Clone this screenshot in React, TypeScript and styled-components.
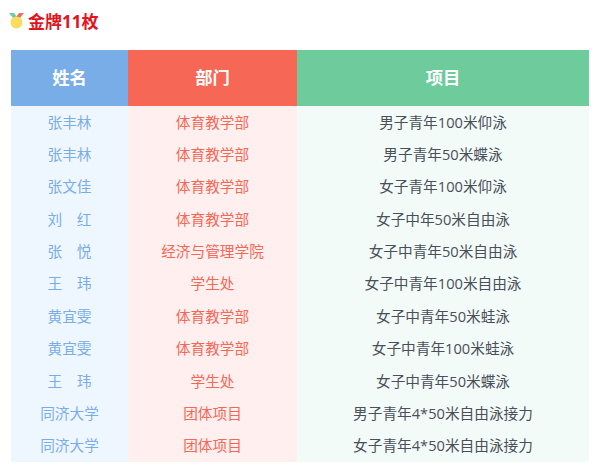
import React from "react";
import styled, { createGlobalStyle } from "styled-components";

const GlobalStyle = createGlobalStyle`
  html, body {
    margin: 0;
    padding: 0;
    background: #fff;
    font-family: "Open Sans", "Noto Sans CJK SC", sans-serif;
  }
`;

const Page = styled.div`
  width: 600px;
  height: 468px;
  overflow: hidden;
  padding: 8px 11px 0;
  box-sizing: border-box;
`;

const Title = styled.h3`
  display: flex;
  align-items: center;
  gap: 4px;
  height: 24px;
  margin: 0 0 18px -2px;
  font-size: 17px;
  font-weight: 700;
  color: #e2141c;
`;

const Table = styled.table`
  width: 578px;
  border-collapse: collapse;
  table-layout: fixed;
`;

const HeadCell = styled.th<{ $bg: string; $w: number }>`
  box-sizing: border-box;
  width: ${({ $w }) => $w}px;
  height: 56px;
  padding: 0 0 3px;
  background: ${({ $bg }) => $bg};
  color: #fff;
  font-size: 17.33px;
  font-weight: 700;
  text-align: center;
`;

const Cell = styled.td<{ $bg: string; $color: string }>`
  box-sizing: border-box;
  height: 32.36px;
  padding: 0 0 1px;
  background: ${({ $bg }) => $bg};
  color: ${({ $color }) => $color};
  font-size: 14.67px;
  line-height: 20px;
  text-align: center;
`;

const rows = [
  ["张丰林", "体育教学部", "男子青年100米仰泳"],
  ["张丰林", "体育教学部", "男子青年50米蝶泳"],
  ["张文佳", "体育教学部", "女子青年100米仰泳"],
  ["刘\u3000红", "体育教学部", "女子中年50米自由泳"],
  ["张\u3000悦", "经济与管理学院", "女子中青年50米自由泳"],
  ["王\u3000玮", "学生处", "女子中青年100米自由泳"],
  ["黄宜雯", "体育教学部", "女子中青年50米蛙泳"],
  ["黄宜雯", "体育教学部", "女子中青年100米蛙泳"],
  ["王\u3000玮", "学生处", "女子中青年50米蝶泳"],
  ["同济大学", "团体项目", "男子青年4*50米自由泳接力"],
  ["同济大学", "团体项目", "女子青年4*50米自由泳接力"],
];

const Medal = () => (
  <svg width="15" height="17" viewBox="0 0 15 17">
    <path d="M0 1h5l3 4-3 2z" fill="#6ecb9c" />
    <path d="M15 1h-5l-3 4 3 2z" fill="#f0705c" />
    <circle cx="7.5" cy="10.5" r="6" fill="#fbdc5f" />
  </svg>
);

export default function App() {
  return (
    <Page>
      <GlobalStyle />
      <Title>
        <Medal />
        金牌11枚
      </Title>
      <Table>
        <thead>
          <tr>
            <HeadCell $bg="#79ade8" $w={117}>姓名</HeadCell>
            <HeadCell $bg="#f76756" $w={169}>部门</HeadCell>
            <HeadCell $bg="#6ecb9c" $w={292}>项目</HeadCell>
          </tr>
        </thead>
        <tbody>
          {rows.map((row, i) => (
            <tr key={i}>
              <Cell $bg="#eef7ff" $color="#79ade8">{row[0]}</Cell>
              <Cell $bg="#fff0ef" $color="#f76756">{row[1]}</Cell>
              <Cell $bg="#f2fbf7" $color="#4a4f5a">{row[2]}</Cell>
            </tr>
          ))}
        </tbody>
      </Table>
    </Page>
  );
}
